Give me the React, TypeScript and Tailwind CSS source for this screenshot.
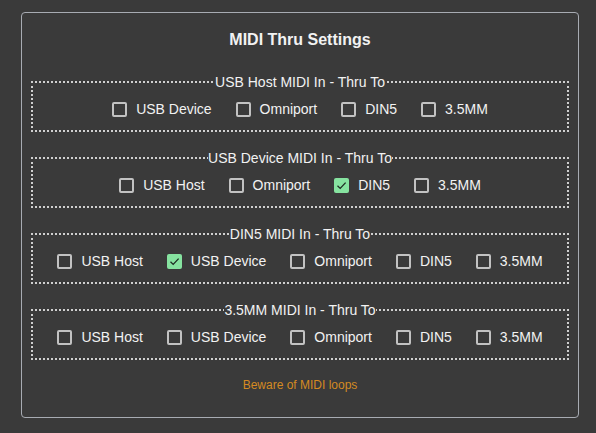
import React from 'react';

interface Group {
    source: string;
    targets: string[];
    checked: string[];
}

const groups: Group[] = [
    { source: 'USB Host', targets: ['USB Device', 'Omniport', 'DIN5', '3.5MM'], checked: [] },
    { source: 'USB Device', targets: ['USB Host', 'Omniport', 'DIN5', '3.5MM'], checked: ['DIN5'] },
    { source: 'DIN5', targets: ['USB Host', 'USB Device', 'Omniport', 'DIN5', '3.5MM'], checked: ['USB Device'] },
    { source: '3.5MM', targets: ['USB Host', 'USB Device', 'Omniport', 'DIN5', '3.5MM'], checked: [] },
];

function Box({ checked }: { checked: boolean }) {
    if (checked) {
        return (
            <span className="w-[15px] h-[15px] rounded-[2px] bg-[#86e3a0] flex items-center justify-center shrink-0">
                <svg width="11" height="11" viewBox="0 0 11 11" fill="none">
                    <path d="M1.5 5.8 L4.2 8.4 L9.6 2.6" stroke="#1d2b22" strokeWidth="1.3" />
                </svg>
            </span>
        );
    }
    return <span className="w-[15px] h-[15px] rounded-[2px] border-2 border-[#c2c2c2] shrink-0" />;
}

export default function App() {
    return (
        <div className="min-h-[433px] bg-[#3a3a3a] pt-[12px] font-['Liberation_Sans',Arial,sans-serif] text-[#f2f2f2]">
            <div className="ml-[21px] w-[558px] h-[406px] border border-[#a7abb2] rounded-[4px] px-[9px] pt-[17px]">
                <h1 className="text-center text-[16px] leading-[20px] font-bold">MIDI Thru Settings</h1>
                <div className="mt-[22px] flex flex-col gap-[16px]">
                    {groups.map((g) => (
                        <fieldset key={g.source} className="border-2 border-dotted border-[#cfcfcf] pt-[7px] pb-[11px] min-w-0">
                            <legend className="mx-auto text-[14px] leading-[20px]">{g.source} MIDI In - Thru To</legend>
                            <div className="flex justify-center gap-[24px]">
                                {g.targets.map((t) => (
                                    <label key={t} className="flex items-center gap-[9px] text-[14px] leading-[20px]">
                                        <Box checked={g.checked.includes(t)} />
                                        {t}
                                    </label>
                                ))}
                            </div>
                        </fieldset>
                    ))}
                </div>
                <p className="mt-[17px] text-center text-[12px] leading-[16px] text-[#d48a22]">Beware of MIDI loops</p>
            </div>
        </div>
    );
}
